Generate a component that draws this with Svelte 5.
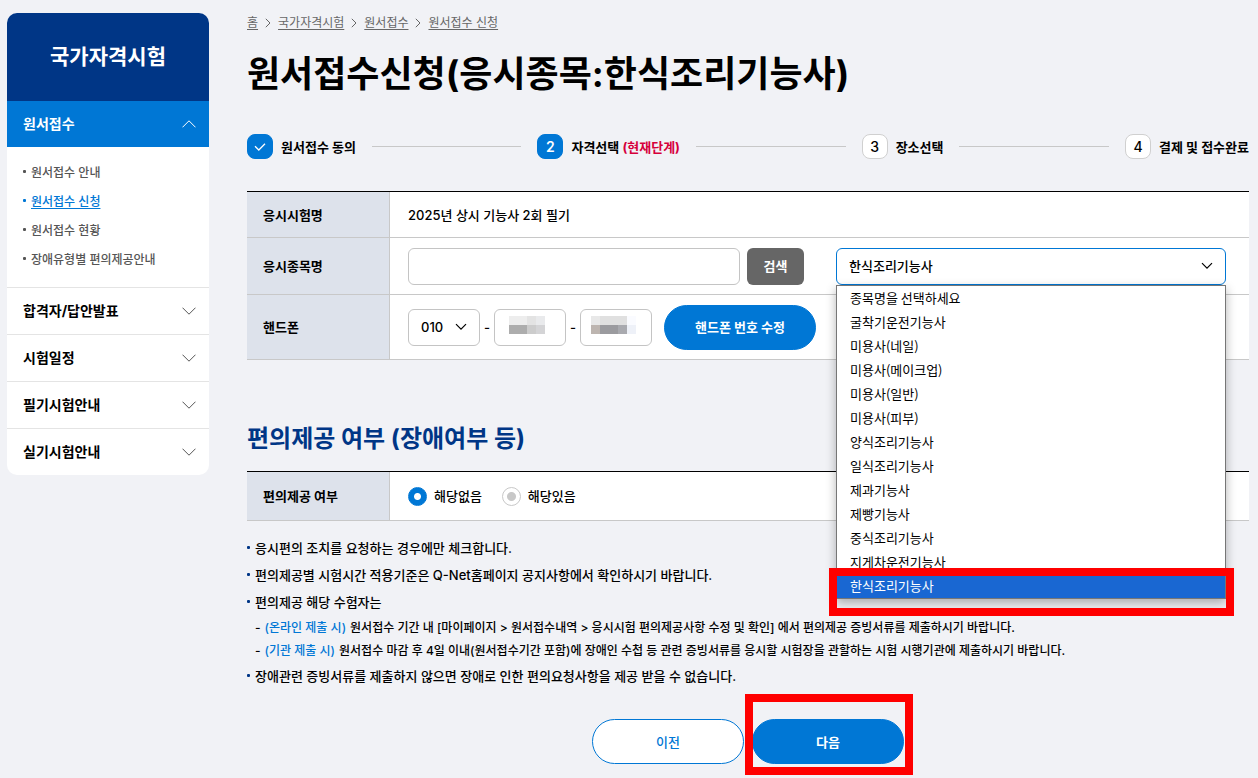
<script lang="ts">
  const crumbs = ['홈', '국가자격시험', '원서접수', '원서접수 신청'];

  const subMenu = ['원서접수 안내', '원서접수 신청', '원서접수 현황', '장애유형별 편의제공안내'];
  const menu = ['합격자/답안발표', '시험일정', '필기시험안내', '실기시험안내'];

  const steps = [
    { label: '원서접수 동의', state: 'done' },
    { label: '자격선택', state: 'current' },
    { label: '장소선택', state: 'todo' },
    { label: '결제 및 접수완료', state: 'todo' }
  ];

  const subjects = [
    '종목명을 선택하세요',
    '굴착기운전기능사',
    '미용사(네일)',
    '미용사(메이크업)',
    '미용사(일반)',
    '미용사(피부)',
    '양식조리기능사',
    '일식조리기능사',
    '제과기능사',
    '제빵기능사',
    '중식조리기능사',
    '지게차운전기능사',
    '한식조리기능사'
  ];

  let subject = $state('한식조리기능사');
  let isOpen = $state(true);
  let keyword = $state('');
  let support = $state('none');

  function pick(item: string) {
    subject = item;
    isOpen = false;
  }

  function toggle(e: MouseEvent) {
    e.preventDefault();
    isOpen = !isOpen;
  }
</script>

{#snippet chevron(up: boolean)}
  <svg class="chevron" class:up width="14" height="8" viewBox="0 0 14 8" aria-hidden="true">
    <path d="M0.5 0.7 7 7.2 13.5 0.7" />
  </svg>
{/snippet}

{#snippet arrow()}
  <svg class="arrow" width="12" height="8" viewBox="0 0 12 8" aria-hidden="true">
    <path d="M1 1.2 6 6.2 11 1.2" />
  </svg>
{/snippet}

<div class="page">
  <nav class="side" aria-label="국가자격시험">
    <h2>국가자격시험</h2>
    <a class="item active" href="#apply">원서접수 {@render chevron(true)}</a>
    <ul class="sub">
      {#each subMenu as label, i}
        <li class:on={i === 1}><a href="#sub">{label}</a></li>
      {/each}
    </ul>
    {#each menu as label}
      <a class="item" href="#menu">{label} {@render chevron(false)}</a>
    {/each}
  </nav>

  <main>
    <nav class="crumbs" aria-label="breadcrumb">
      {#each crumbs as crumb, i}
        {#if i > 0}
          <svg width="6" height="10" viewBox="0 0 6 10" aria-hidden="true"><path d="M0.8 0.8 5 5 0.8 9.2" /></svg>
        {/if}
        <a href="#crumb">{crumb}</a>
      {/each}
    </nav>

    <h1>원서접수신청(응시종목:한식조리기능사)</h1>

    <ol class="steps">
      {#each steps as step, i}
        <li class={step.state}>
          <span class="badge">
            {#if step.state === 'done'}
              <svg width="12" height="8" viewBox="0 0 12 8" aria-hidden="true"><path d="M1 3.2 4.8 7 11 0.8" /></svg>
            {:else}
              {i + 1}
            {/if}
          </span>
          <span class="label">
            {step.label}
            {#if step.state === 'current'}<em>(현재단계)</em>{/if}
          </span>
        </li>
      {/each}
    </ol>

    <table>
      <tbody>
        <tr class="short">
          <th scope="row">응시시험명</th>
          <td>2025년 상시 기능사 2회 필기</td>
        </tr>
        <tr class="mid">
          <th scope="row"><label for="keyword">응시종목명</label></th>
          <td>
            <div class="subject">
              <div class="search">
                <input id="keyword" class="field" type="text" bind:value={keyword} />
                <button class="find" type="button">검색</button>
              </div>
              <div class="combo">
                <select
                  class="field"
                  class:open={isOpen}
                  aria-label="종목 선택"
                  bind:value={subject}
                  onmousedown={toggle}
                >
                  {#each subjects as item}
                    <option>{item}</option>
                  {/each}
                </select>
                {@render arrow()}
                {#if isOpen}
                  <div class="options">
                    {#each subjects as item}
                      <button type="button" class:selected={item === subject} onclick={() => pick(item)}>
                        {item}
                      </button>
                    {/each}
                    <div class="mark mark-option"></div>
                  </div>
                {/if}
              </div>
            </div>
          </td>
        </tr>
        <tr class="tall">
          <th scope="row">핸드폰</th>
          <td>
            <div class="phone">
              <div class="part">
                <select class="field" aria-label="핸드폰 앞자리">
                  <option>010</option>
                  <option>011</option>
                </select>
                {@render arrow()}
              </div>
              <span class="dash">-</span>
              <div class="part">
                <input class="field" type="text" aria-label="핸드폰 가운데자리" />
                <svg class="mosaic" width="45" height="18" shape-rendering="crispEdges" aria-hidden="true">
                  <rect x="4" width="18" height="9" fill="#ededed" />
                  <rect x="22" width="9" height="9" fill="#e3e3e3" />
                  <rect x="31" width="9" height="9" fill="#e9eaec" />
                  <rect x="4" y="9" width="18" height="9" fill="#adadad" />
                  <rect x="22" y="9" width="9" height="9" fill="#cccccc" />
                  <rect x="31" y="9" width="9" height="9" fill="#d4d4d6" />
                </svg>
              </div>
              <span class="dash">-</span>
              <div class="part">
                <input class="field" type="text" aria-label="핸드폰 뒷자리" />
                <svg class="mosaic" width="45" height="18" shape-rendering="crispEdges" aria-hidden="true">
                  <rect width="9" height="9" fill="#e8e8e8" />
                  <rect x="9" width="27" height="9" fill="#e0e0e0" />
                  <rect x="36" width="9" height="9" fill="#fafbff" />
                  <rect y="9" width="9" height="9" fill="#bdb5b0" />
                  <rect x="9" y="9" width="18" height="9" fill="#9b9b9f" />
                  <rect x="27" y="9" width="9" height="9" fill="#a9aaaf" />
                  <rect x="36" y="9" width="9" height="9" fill="#eef1f8" />
                </svg>
              </div>
              <button class="pill" type="button">핸드폰 번호 수정</button>
            </div>
          </td>
        </tr>
      </tbody>
    </table>

    <h2 class="section">편의제공 여부 (장애여부 등)</h2>

    <table>
      <tbody>
        <tr>
          <th scope="row">편의제공 여부</th>
          <td>
            <div class="radios">
              <label><input type="radio" name="support" value="none" bind:group={support} />해당없음</label>
              <label><input type="radio" name="support" value="need" bind:group={support} />해당있음</label>
            </div>
          </td>
        </tr>
      </tbody>
    </table>

    <ul class="notes">
      <li>응시편의 조치를 요청하는 경우에만 체크합니다.</li>
      <li>편의제공별 시험시간 적용기준은 Q-Net홈페이지 공지사항에서 확인하시기 바랍니다.</li>
      <li>
        편의제공 해당 수험자는
        <ul>
          <li><b>(온라인 제출 시)</b> 원서접수 기간 내 [마이페이지 &gt; 원서접수내역 &gt; 응시시험 편의제공사항 수정 및 확인] 에서 편의제공 증빙서류를 제출하시기 바랍니다.</li>
          <li><b>(기관 제출 시)</b> 원서접수 마감 후 4일 이내(원서접수기간 포함)에 장애인 수첩 등 관련 증빙서류를 응시할 시험장을 관할하는 시험 시행기관에 제출하시기 바랍니다.</li>
        </ul>
      </li>
      <li>장애관련 증빙서류를 제출하지 않으면 장애로 인한 편의요청사항을 제공 받을 수 없습니다.</li>
    </ul>

    <div class="actions">
      <button class="pill line" type="button">이전</button>
      <div class="next">
        <button class="pill" type="button">다음</button>
        <div class="mark mark-next"></div>
      </div>
    </div>
  </main>
</div>

<style>
:global(body) {
  background: #f1f2f6;
}

.page {
  --navy: #003686;
  --blue: #0077d5;
  --line: #c8c8c8;
  display: flex;
  align-items: flex-start;
  gap: 38px;
  padding: 13px 9px 14px 7px;
  color: #000;
  font-family: Inter, "Noto Sans CJK KR", sans-serif;
  font-size: 13px;
  font-weight: 500;
  line-height: 20px;
}

.page * {
  box-sizing: border-box;
}

h1, h2, ul, ol {
  margin: 0;
  padding: 0;
}

ul, ol {
  list-style: none;
}

a {
  color: inherit;
}

button, input, select {
  font: inherit;
  color: inherit;
}

button {
  cursor: pointer;
}

/* Side menu */
.side {
  flex: 0 0 202px;
  border-radius: 10px;
  background: #fff;
  overflow: hidden;
}

.side h2 {
  padding: 28px 0;
  background: var(--navy);
  color: #fff;
  font-size: 21px;
  font-weight: 700;
  line-height: 32px;
  text-align: center;
}

.item {
  display: flex;
  align-items: center;
  justify-content: space-between;
  height: 47px;
  padding: 0 13px 0 16px;
  border-top: 1px solid #e4e4e4;
  font-size: 14px;
  font-weight: 700;
  text-decoration: none;
}

.item.active {
  height: 46px;
  border: 0;
  background: var(--blue);
  color: #fff;
}

.chevron {
  fill: none;
  stroke: #555;
}

.chevron.up {
  stroke: #fff;
  transform: rotate(180deg);
}

.sub {
  padding: 11px 0 13px 16px;
  color: #555;
  font-size: 12px;
  line-height: 29px;
}

.sub li,
.notes > li {
  position: relative;
  padding-left: 8px;
}

.sub li::before,
.notes > li::before {
  content: "";
  position: absolute;
  left: 0;
  top: 12px;
  width: 3px;
  height: 3px;
  border-radius: 1px;
  background: currentColor;
}

.sub a {
  text-decoration: none;
}

.sub .on {
  color: var(--blue);
}

.sub .on a {
  text-decoration: underline;
  text-underline-offset: 2px;
}

/* Heading and steps */
main {
  flex: 1;
  min-width: 0;
}

.crumbs {
  display: flex;
  align-items: center;
  gap: 7px;
  color: #666;
  font-size: 12px;
  font-weight: 400;
}

.crumbs a {
  text-underline-offset: 2px;
}

.crumbs svg {
  fill: none;
  stroke: #666;
}

h1 {
  margin-top: 15px;
  font-size: 36px;
  font-weight: 700;
  line-height: 52px;
}

.steps {
  display: flex;
  gap: 16px;
  margin-top: 34px;
}

.steps li {
  display: flex;
  align-items: center;
  gap: 8px;
  font-weight: 700;
  white-space: nowrap;
}

.steps li:not(:last-child) {
  flex: 1 1 auto;
}

.steps li:not(:last-child)::after {
  content: "";
  flex: 1;
  height: 1px;
  margin-left: 8px;
  background: var(--line);
}

.badge {
  display: flex;
  align-items: center;
  justify-content: center;
  width: 26px;
  height: 25px;
  border: 1px solid #d0d0d0;
  border-radius: 8px;
  background: #fff;
  font-size: 14px;
  font-weight: 500;
}

.badge svg {
  fill: none;
  stroke: #fff;
  stroke-width: 1.3;
}

.done .badge,
.current .badge {
  border-color: var(--blue);
  background: var(--blue);
  color: #fff;
  font-weight: 600;
}

em {
  color: #d6003b;
  font-style: normal;
}

/* Tables */
table {
  width: 100%;
  margin-top: 32px;
  border-top: 1px solid #000;
  border-spacing: 0;
  background: #fff;
}

th,
td {
  height: 49px;
  padding: 0 23px 0 18px;
  border-bottom: 1px solid var(--line);
  text-align: left;
}

th {
  width: 143px;
  padding: 0 0 0 16px;
  border-right: 1px solid var(--line);
  background: #dde2eb;
  font-weight: 700;
}

.short > * {
  height: 46px;
}

.mid > * {
  height: 57px;
}

.tall > * {
  height: 65px;
}

.field {
  display: block;
  width: 100%;
  height: 37px;
  margin: 0;
  padding: 0 12px;
  border: 1px solid #c4c4c4;
  border-radius: 6px;
  outline: 0;
  background: #fff;
  appearance: none;
}

.field.open {
  border-color: var(--blue);
}

.subject {
  display: grid;
  grid-template-columns: minmax(0, 396fr) minmax(0, 390fr);
  gap: 32px;
}

.search {
  display: flex;
  gap: 7px;
}

.find {
  flex: 0 0 57px;
  border: 0;
  border-radius: 6px;
  background: #666;
  color: #fff;
  font-weight: 700;
}

.combo,
.part,
.next {
  position: relative;
}

.arrow {
  position: absolute;
  top: 14px;
  right: 13px;
  fill: none;
  stroke: #000;
  stroke-width: 1.2;
  pointer-events: none;
}

.options {
  position: absolute;
  top: 100%;
  left: 0;
  right: 0;
  z-index: 1;
  border: 1px solid #767676;
  background: #fff;
  box-shadow: 0 4px 10px rgba(0, 0, 0, 0.3);
}

.options button {
  display: block;
  width: 100%;
  height: 24px;
  padding: 0 13px;
  border: 0;
  background: none;
  font-family: "Noto Sans CJK KR", sans-serif;
  font-weight: 400;
  line-height: 22px;
  text-align: left;
}

.options .selected {
  background: #1967d2;
  color: #fff;
}

/* Red frames around what to press next */
.mark {
  position: absolute;
  border: 8px solid #f00;
  pointer-events: none;
}

.mark-option {
  left: -8px;
  right: -9px;
  bottom: -18px;
  height: 48px;
}

.mark-next {
  top: -25px;
  right: -9px;
  bottom: -11px;
  left: -7px;
}

.phone {
  display: flex;
  align-items: center;
}

.part {
  flex: 0 0 72px;
}

.dash {
  flex: 0 0 14px;
  text-align: center;
}

.mosaic {
  position: absolute;
  top: 7px;
  left: 11px;
}

.pill {
  display: block;
  width: 152px;
  height: 45px;
  padding: 0;
  border: 1px solid var(--blue);
  border-radius: 23px;
  background: var(--blue);
  color: #fff;
  font-weight: 700;
}

.phone .pill {
  margin-left: 12px;
}

.pill.line {
  background: #fff;
  color: var(--blue);
  font-weight: 500;
}

.section {
  margin-top: 61px;
  color: var(--navy);
  font-size: 24px;
  font-weight: 700;
  line-height: 36px;
}

.section + table {
  margin-top: 14px;
}

.radios {
  display: flex;
  gap: 20px;
}

.radios label {
  display: flex;
  align-items: center;
  gap: 7px;
}

.radios input {
  width: 19px;
  height: 19px;
  margin: 0;
  border: 1px solid var(--line);
  border-radius: 50%;
  background: radial-gradient(circle, #c8c8c8 4px, #fff 5px);
  appearance: none;
}

.radios input:checked {
  border-color: var(--blue);
  background: radial-gradient(circle, #fff 3px, var(--blue) 4px);
}

/* Notes */
.notes {
  margin-top: 14px;
  line-height: 27px;
}

.notes > li::before {
  top: 11px;
  background: var(--navy);
}

.notes ul {
  margin-bottom: 1px;
  font-size: 12px;
  line-height: 23px;
}

.notes ul li {
  display: flex;
  gap: 4px;
}

.notes ul li::before {
  content: "-";
}

.notes b {
  flex-shrink: 0;
  color: var(--blue);
  font-weight: 500;
}

.actions {
  display: flex;
  justify-content: center;
  gap: 8px;
  margin-top: 29px;
}
</style>
